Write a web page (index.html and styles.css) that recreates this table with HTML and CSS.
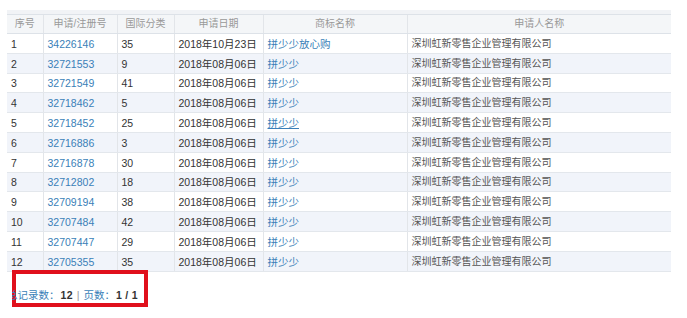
FILE: index.html
```html
<!DOCTYPE html>
<html lang="zh">
<head>
<meta charset="utf-8">
<title>商标列表</title>
<link rel="stylesheet" href="styles.css">
</head>
<body>
<div class="page">
  <div class="strip"></div>
  <table class="grid">
    <colgroup>
      <col class="c1"><col class="c2"><col class="c3"><col class="c4"><col class="c5"><col class="c6">
    </colgroup>
    <thead>
      <tr><th>序号</th><th>申请/注册号</th><th>国际分类</th><th>申请日期</th><th>商标名称</th><th>申请人名称</th></tr>
    </thead>
    <tbody>
      <tr><td>1</td><td><a class="lnk">34226146</a></td><td>35</td><td>2018年10月23日</td><td><a class="lnk">拼少少放心购</a></td><td class="co">深圳虹新零售企业管理有限公司</td></tr>
      <tr><td>2</td><td><a class="lnk">32721553</a></td><td>9</td><td>2018年08月06日</td><td><a class="lnk">拼少少</a></td><td class="co">深圳虹新零售企业管理有限公司</td></tr>
      <tr><td>3</td><td><a class="lnk">32721549</a></td><td>41</td><td>2018年08月06日</td><td><a class="lnk">拼少少</a></td><td class="co">深圳虹新零售企业管理有限公司</td></tr>
      <tr><td>4</td><td><a class="lnk">32718462</a></td><td>5</td><td>2018年08月06日</td><td><a class="lnk">拼少少</a></td><td class="co">深圳虹新零售企业管理有限公司</td></tr>
      <tr><td>5</td><td><a class="lnk">32718452</a></td><td>25</td><td>2018年08月06日</td><td><a class="lnk hover">拼少少</a></td><td class="co">深圳虹新零售企业管理有限公司</td></tr>
      <tr><td>6</td><td><a class="lnk">32716886</a></td><td>3</td><td>2018年08月06日</td><td><a class="lnk">拼少少</a></td><td class="co">深圳虹新零售企业管理有限公司</td></tr>
      <tr><td>7</td><td><a class="lnk">32716878</a></td><td>30</td><td>2018年08月06日</td><td><a class="lnk">拼少少</a></td><td class="co">深圳虹新零售企业管理有限公司</td></tr>
      <tr><td>8</td><td><a class="lnk">32712802</a></td><td>18</td><td>2018年08月06日</td><td><a class="lnk">拼少少</a></td><td class="co">深圳虹新零售企业管理有限公司</td></tr>
      <tr><td>9</td><td><a class="lnk">32709194</a></td><td>38</td><td>2018年08月06日</td><td><a class="lnk">拼少少</a></td><td class="co">深圳虹新零售企业管理有限公司</td></tr>
      <tr><td>10</td><td><a class="lnk">32707484</a></td><td>42</td><td>2018年08月06日</td><td><a class="lnk">拼少少</a></td><td class="co">深圳虹新零售企业管理有限公司</td></tr>
      <tr><td>11</td><td><a class="lnk">32707447</a></td><td>29</td><td>2018年08月06日</td><td><a class="lnk">拼少少</a></td><td class="co">深圳虹新零售企业管理有限公司</td></tr>
      <tr><td>12</td><td><a class="lnk">32705355</a></td><td>35</td><td>2018年08月06日</td><td><a class="lnk">拼少少</a></td><td class="co">深圳虹新零售企业管理有限公司</td></tr>
    </tbody>
  </table>
  <div class="pager-wrap">
    <div class="pager"><span class="lbl">总记录数：</span><b class="num">12</b><span class="sep">|</span><span class="lbl">页数：</span><b class="num">1 / 1</b></div>
    <div class="mark"></div>
  </div>
</div>
</body>
</html>
```
FILE: styles.css
```css
html, body {
  margin: 0;
  padding: 0;
  background: #ffffff;
}
.page {
  padding: 10px 0 0 7px;
  font-family: "Liberation Sans", "Noto Sans CJK SC", sans-serif;
  font-size: 10px;
  color: #333;
}
.strip {
  width: 664px;
  height: 4px;
  background: #f1f3f6;
}
.grid {
  width: 664px;
  border-collapse: collapse;
  table-layout: fixed;
}
.c1 { width: 36px; }
.c2 { width: 74px; }
.c3 { width: 57px; }
.c4 { width: 89px; }
.c5 { width: 144px; }
.c6 { width: 264px; }
.grid thead tr { height: 19px; }
.grid tbody tr { height: 19.8px; }
.grid th {
  padding: 0;
  background: #f4f6f8;
  color: #999;
  font-weight: normal;
  text-align: center;
  border-top: 1px solid #dde2e8;
  border-bottom: 1px solid #dde2e8;
  border-left: 1px solid #e2e5e9;
  line-height: 14px;
}
.grid td {
  padding: 1px 0 0 4px;
  line-height: 14px;
  border-bottom: 1px solid #e3e7ec;
  border-left: 1px solid #e2e5e9;
  white-space: nowrap;
  overflow: hidden;
  font-size: 10.5px;
}
.grid td.co { font-size: 10px; }
.grid th:first-child, .grid td:first-child { border-left: none; }
.grid tbody tr:nth-child(even) td { background: #f1f4fa; }
.lnk {
  color: #3a7fb8;
  text-decoration: none;
}
.lnk.hover { text-decoration: underline; }
.co { color: #555; }
.pager-wrap {
  position: relative;
  width: 136px;
  height: 37px;
  margin: -2px 0 0 5px;
  overflow: hidden;
}
.pager {
  position: relative;
  z-index: 2;
  margin: 18px 0 0 -5px;
  line-height: 14px;
  white-space: nowrap;
  font-size: 10.5px;
}
.pager .lbl { color: #3a7fb8; }
.pager .num { color: #333; margin-left: 1px; letter-spacing: 0.3px; }
.pager .sep { color: #999; margin: 0 4px; }
.mark {
  position: absolute;
  left: 0;
  top: 0;
  width: 136px;
  height: 37px;
  box-sizing: border-box;
  border: 4px solid #e0101c;
  z-index: 1;
}
```
